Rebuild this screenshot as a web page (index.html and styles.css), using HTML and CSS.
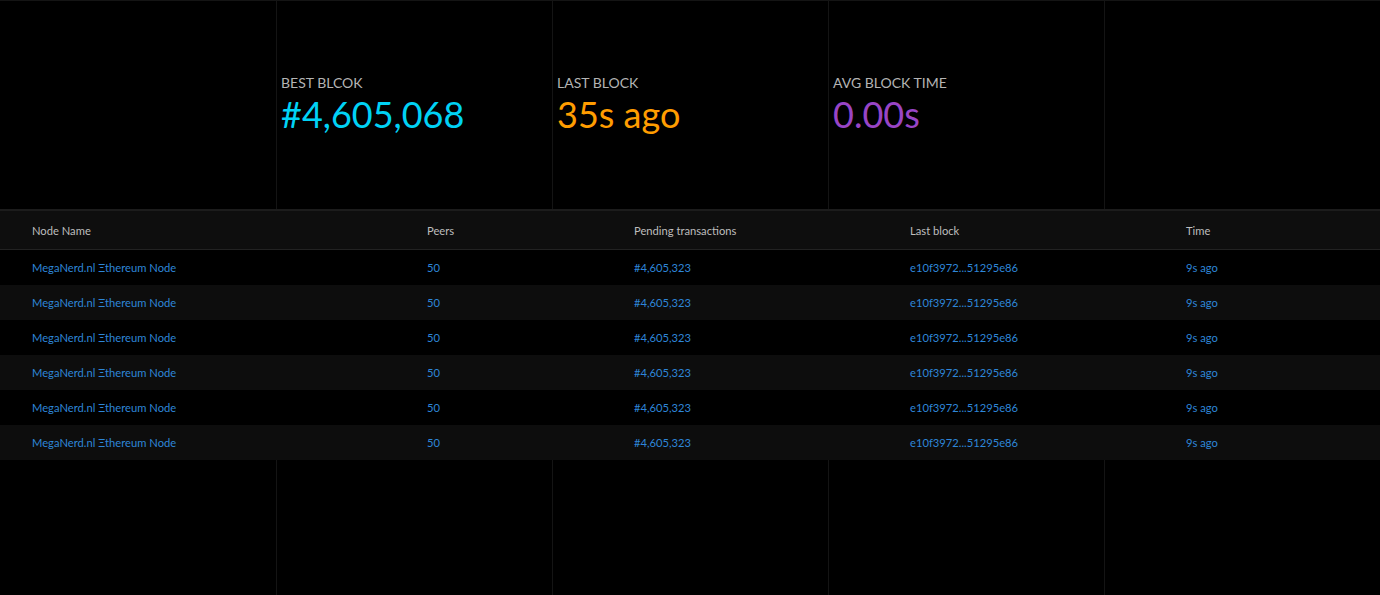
FILE: index.html
```html
<!DOCTYPE html>
<html>
<head>
<meta charset="utf-8">
<link rel="stylesheet" href="styles.css">
</head>
<body>
<div class="page">
  <section class="stats">
    <div class="col"></div>
    <div class="col stat">
      <div class="label">BEST BLCOK</div>
      <div class="value cyan">#4,605,068</div>
    </div>
    <div class="col stat">
      <div class="label">LAST BLOCK</div>
      <div class="value orange">35s ago</div>
    </div>
    <div class="col stat">
      <div class="label">AVG BLOCK TIME</div>
      <div class="value purple">0.00s</div>
    </div>
    <div class="col"></div>
  </section>
  <section class="table">
    <div class="row head">
      <div>Node Name</div><div>Peers</div><div>Pending transactions</div><div>Last block</div><div>Time</div>
    </div>
    <div class="row"><div>MegaNerd.nl Ξthereum Node</div><div>50</div><div>#4,605,323</div><div>e10f3972...51295e86</div><div>9s ago</div></div>
    <div class="row"><div>MegaNerd.nl Ξthereum Node</div><div>50</div><div>#4,605,323</div><div>e10f3972...51295e86</div><div>9s ago</div></div>
    <div class="row"><div>MegaNerd.nl Ξthereum Node</div><div>50</div><div>#4,605,323</div><div>e10f3972...51295e86</div><div>9s ago</div></div>
    <div class="row"><div>MegaNerd.nl Ξthereum Node</div><div>50</div><div>#4,605,323</div><div>e10f3972...51295e86</div><div>9s ago</div></div>
    <div class="row"><div>MegaNerd.nl Ξthereum Node</div><div>50</div><div>#4,605,323</div><div>e10f3972...51295e86</div><div>9s ago</div></div>
    <div class="row"><div>MegaNerd.nl Ξthereum Node</div><div>50</div><div>#4,605,323</div><div>e10f3972...51295e86</div><div>9s ago</div></div>
  </section>
  <section class="filler">
    <div class="col"></div><div class="col"></div><div class="col"></div><div class="col"></div><div class="col"></div>
  </section>
</div>
</body>
</html>
```
FILE: styles.css
```css
html, body {
  margin: 0;
  padding: 0;
  background: #000;
  height: 100%;
}
body {
  font-family: Lato, "Noto Sans", sans-serif;
  overflow: hidden;
}
.page {
  display: flex;
  flex-direction: column;
  height: 595px;
  border-top: 1px solid #141414;
  box-sizing: border-box;
}
.stats {
  display: flex;
  height: 208px;
  border-bottom: 2px solid #1c1c1c;
}
.col {
  width: 276px;
  box-sizing: border-box;
  border-left: 1px solid #141414;
}
.col:first-child {
  border-left: none;
}
.stat {
  padding-left: 4px;
  padding-top: 74px;
}
.label {
  color: #b4b4b4;
  font-size: 14px;
  line-height: 16px;
}
.value {
  font-size: 36px;
  line-height: 42px;
  margin-top: 2px;
  font-weight: 400;
}
.cyan { color: #00d2f5; }
.orange { color: #ff9d00; }
.purple { color: #9845c6; }
.table {
  display: flex;
  flex-direction: column;
}
.row {
  display: grid;
  grid-template-columns: 395px 207px 276px 276px 1fr;
  padding-left: 32px;
  height: 35px;
  align-items: center;
  font-size: 11.2px;
  color: #2e86d8;
  background: #000;
}
.row:nth-child(odd) {
  background: #0d0d0d;
}
.row.head {
  height: 38px;
  background: #0e0e0e;
  color: #bdbdbd;
  border-bottom: 1px solid #222;
}
.filler {
  display: flex;
  flex: 1;
}
```
